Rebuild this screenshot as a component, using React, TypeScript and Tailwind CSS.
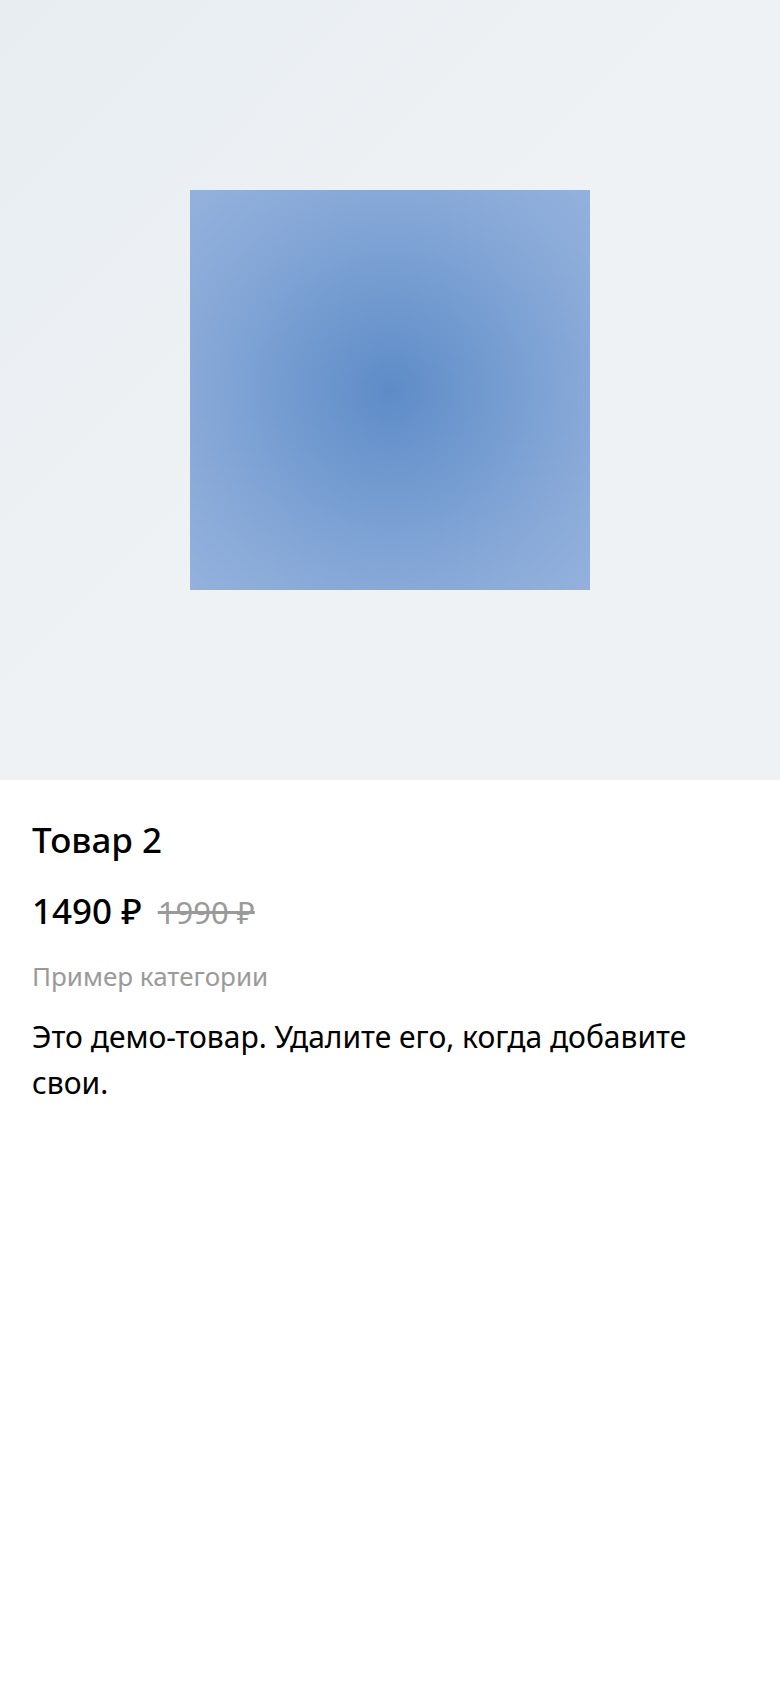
export default function App() {
  return (
    <div className="min-h-[1688px] bg-white font-['Noto_Sans',sans-serif] text-black">
      <div className="flex aspect-square w-full items-center justify-center bg-[linear-gradient(135deg,#e8edf1_0%,#eef2f5_50%,#eff2f5_100%)]">
        <div className="h-[400px] w-[400px] bg-[radial-gradient(circle_at_center,#5e8bc7_0%,#739bd0_35%,#88a9d8_70%,#94b1dc_100%)]" />
      </div>
      <div className="px-8 pt-[34px]">
        <h1 className="text-[35px] leading-[52px] font-medium">Товар 2</h1>
        <div className="mt-[19px] flex items-baseline gap-[16px]">
          <span className="text-[35px] leading-[52px] font-medium">1490 ₽</span>
          <span className="text-[31px] leading-[48px] text-[#9a9a9a] line-through">1990 ₽</span>
        </div>
        <p className="mt-[19px] text-[26px] leading-[40px] text-[#9a9a9a]">Пример категории</p>
        <p className="mt-[18px] text-[30px] leading-[46px]">
          Это демо-товар. Удалите его, когда добавите свои.
        </p>
      </div>
    </div>
  );
}
